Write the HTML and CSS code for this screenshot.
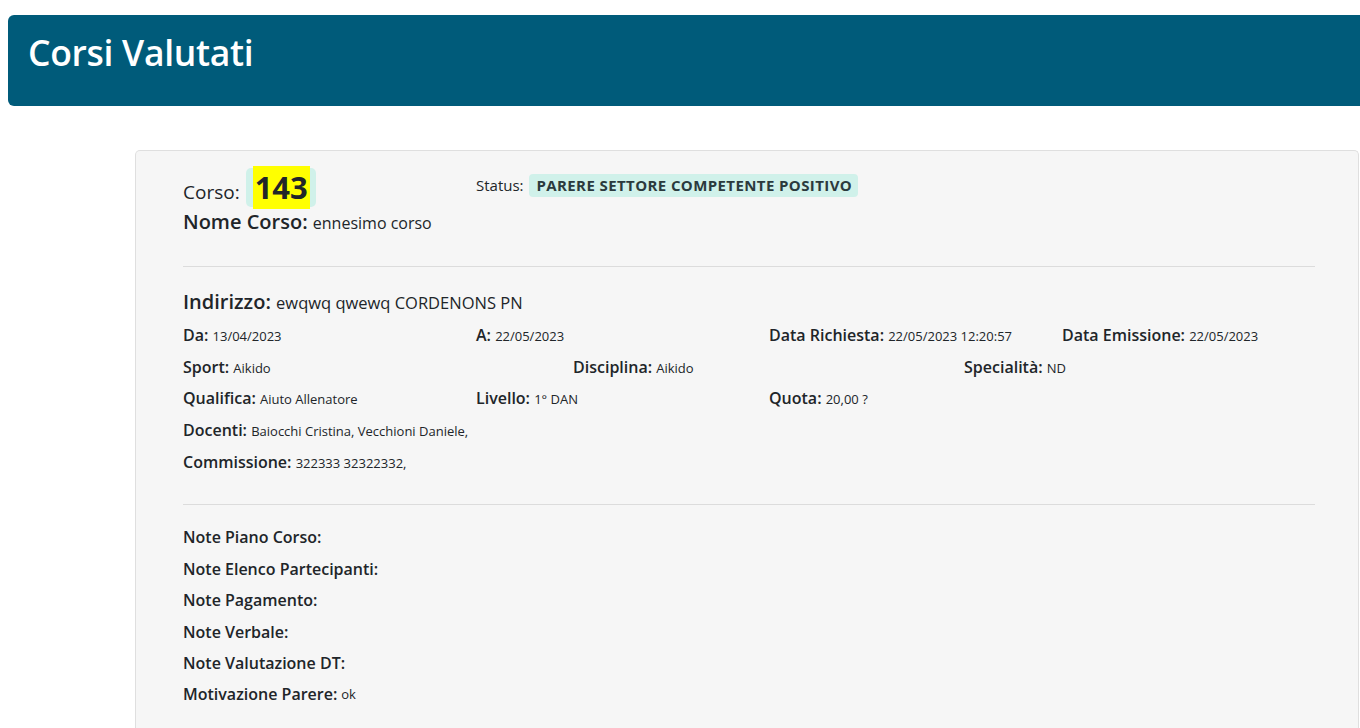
FILE: index.html
```html
<!DOCTYPE html>
<html lang="it">
<head>
<meta charset="utf-8">
<title>Corsi Valutati</title>
<link rel="stylesheet" href="styles.css">
</head>
<body>
<header class="page-header">
  <h1 class="page-title">Corsi Valutati</h1>
</header>

<section class="card">
  <div class="top-row">
    <div class="top-col">
      <div class="corso-line">
        <span class="corso-label">Corso:</span>
        <span class="corso-badge"><mark class="corso-num">143</mark></span>
      </div>
      <div class="nome-line"><b>Nome Corso:</b> <span class="nome-val">ennesimo corso</span></div>
    </div>
    <div class="status-col">
      <span class="status-label">Status:</span>
      <span class="status-badge">PARERE SETTORE COMPETENTE POSITIVO</span>
    </div>
  </div>

  <hr class="sep sep-first">

  <div class="indirizzo"><b>Indirizzo:</b> <span class="ind-val">ewqwq qwewq CORDENONS PN</span></div>

  <div class="row row4">
    <div class="field"><b>Da:</b> <small>13/04/2023</small></div>
    <div class="field"><b>A:</b> <small>22/05/2023</small></div>
    <div class="field"><b>Data Richiesta:</b> <small>22/05/2023 12:20:57</small></div>
    <div class="field"><b>Data Emissione:</b> <small>22/05/2023</small></div>
  </div>
  <div class="row row3">
    <div class="field"><b>Sport:</b> <small>Aikido</small></div>
    <div class="field"><b>Disciplina:</b> <small>Aikido</small></div>
    <div class="field"><b>Specialità:</b> <small>ND</small></div>
  </div>
  <div class="row row4">
    <div class="field"><b>Qualifica:</b> <small>Aiuto Allenatore</small></div>
    <div class="field"><b>Livello:</b> <small>1° DAN</small></div>
    <div class="field"><b>Quota:</b> <small>20,00 ?</small></div>
  </div>
  <div class="row">
    <div class="field"><b>Docenti:</b> <small>Baiocchi Cristina, Vecchioni Daniele,</small></div>
  </div>
  <div class="row">
    <div class="field"><b>Commissione:</b> <small>322333 32322332,</small></div>
  </div>

  <hr class="sep sep-second">

  <div class="notes">
    <div class="note"><b>Note Piano Corso:</b></div>
    <div class="note"><b>Note Elenco Partecipanti:</b></div>
    <div class="note"><b>Note Pagamento:</b></div>
    <div class="note"><b>Note Verbale:</b></div>
    <div class="note"><b>Note Valutazione DT:</b></div>
    <div class="note"><b>Motivazione Parere:</b> <small>ok</small></div>
  </div>
</section>
</body>
</html>
```

FILE: styles.css
```css
body {
  margin: 8px 0 0 8px;
  background: #ffffff;
  color: #212529;
  font-family: "Segoe UI", "Open Sans", "Noto Sans", sans-serif;
  font-size: 16px;
  line-height: 1.5;
}

b {
  font-weight: 600;
}

small {
  font-size: 13px;
}

.page-header {
  margin-top: 7px;
  height: 91px;
  box-sizing: border-box;
  background: #005b7a;
  border-radius: 6px 0 0 6px;
  padding: 17px 20px 0;
}

.page-title {
  margin: 0;
  color: #ffffff;
  font-size: 35.5px;
  font-weight: 600;
  line-height: 40px;
  letter-spacing: -0.3px;
}

.card {
  margin: 44px 1px 0 127px;
  box-sizing: border-box;
  height: 578px;
  background: #f6f6f6;
  border: 1px solid #dfdfdf;
  border-bottom: 0;
  border-radius: 5px 5px 0 0;
  padding: 14px 44px 0 47px;
}

.top-row {
  display: flex;
}

.top-col {
  width: 293px;
}

.corso-line {
  display: flex;
  align-items: center;
  height: 44px;
}

.corso-label {
  font-size: 19px;
  margin-top: 10px;
  margin-right: 6px;
}

.corso-badge {
  display: inline-flex;
  background: #d0f1ea;
  border-radius: 5px;
  padding: 0 6px 0 7px;
  height: 39px;
  align-items: center;
}

.corso-num {
  background: #ffff00;
  color: #212529;
  font-size: 31px;
  font-weight: 700;
  line-height: 43px;
  padding: 0 2px;
}

.nome-line {
  font-size: 20px;
  line-height: 26px;
}

.nome-val {
  font-size: 16px;
}

.status-col {
  padding-top: 9px;
  font-size: 15px;
}

.status-label {
  margin-right: 2px;
}

.status-badge {
  display: inline-block;
  background: #d0f1ea;
  border-radius: 4px;
  padding: 0 6px 0 7px;
  font-size: 15px;
  font-weight: 700;
  letter-spacing: 0.4px;
  line-height: 23px;
  color: #2b3a3d;
}

.sep {
  border: 0;
  border-top: 1px solid #dcdcdc;
  margin: 0;
  width: 1132px;
}

.sep-first {
  margin-top: 30px;
}

.indirizzo {
  margin-top: 21px;
  margin-bottom: 2px;
  font-size: 20px;
  line-height: 28px;
}

.ind-val {
  font-size: 16.5px;
}

.row {
  display: grid;
  height: 31.75px;
  align-items: center;
}

.row4 {
  grid-template-columns: 293px 293px 293px 293px;
}

.row3 {
  grid-template-columns: 390px 391px 390px;
}

.field {
  white-space: nowrap;
}

.sep-second {
  margin-top: 26px;
}

.notes {
  margin-top: 17px;
}

.note {
  height: 31.4px;
  display: flex;
  align-items: center;
  white-space: nowrap;
}

.note small {
  margin-left: 4px;
}
```
